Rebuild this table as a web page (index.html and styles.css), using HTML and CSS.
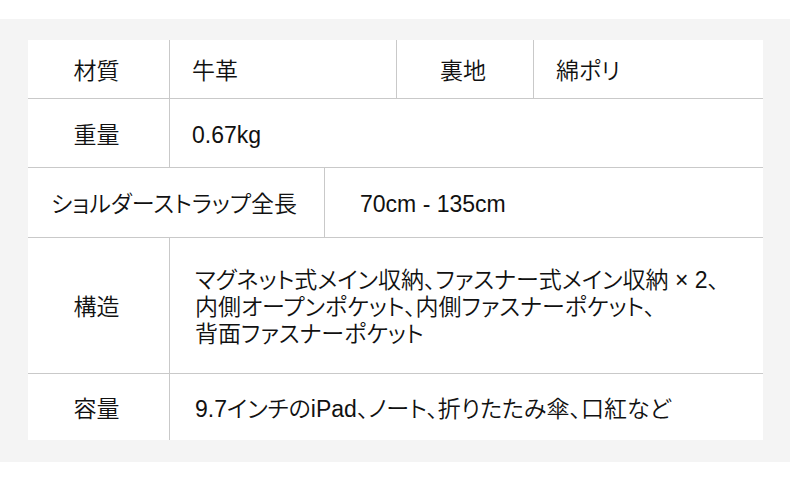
FILE: index.html
```html
<!DOCTYPE html>
<html lang="ja">
<head>
<meta charset="utf-8">
<link rel="stylesheet" href="styles.css">
</head>
<body>
<div class="band">
  <div class="spec">
    <div class="row row-1">
      <div class="cell label">材質</div>
      <div class="cell value">牛革</div>
      <div class="cell label">裏地</div>
      <div class="cell value">綿ポリ</div>
    </div>
    <div class="row row-2">
      <div class="cell label">重量</div>
      <div class="cell value">0.67kg</div>
    </div>
    <div class="row row-3">
      <div class="cell label">ショルダーストラップ全長</div>
      <div class="cell value wide">70cm - 135cm</div>
    </div>
    <div class="row row-4">
      <div class="cell label">構造</div>
      <div class="cell value multi"><p>マグネット式メイン収納、ファスナー式メイン収納 × 2、<br>内側オープンポケット、内側ファスナーポケット、<br>背面ファスナーポケット</p></div>
    </div>
    <div class="row row-5">
      <div class="cell label">容量</div>
      <div class="cell value multi"><p>9.7インチのiPad、ノート、折りたたみ傘、口紅など</p></div>
    </div>
  </div>
</div>
</body>
</html>
```

FILE: styles.css
```css
html, body {
  margin: 0;
  padding: 0;
  background: #ffffff;
}

body {
  font-family: "Liberation Sans", "Noto Sans CJK JP", sans-serif;
  font-size: 23px;
  font-weight: 350;
  color: #111111;
  font-feature-settings: "palt";
}

.band {
  margin-top: 19px;
  background: #f4f4f4;
  padding: 21px 27px 22px 28px;
}

.spec {
  background: #ffffff;
  width: 735px;
}

.row {
  display: grid;
  box-sizing: border-box;
}

.row + .row {
  border-top: 1px solid #c9c9c9;
}

.row-1 { height: 58px; grid-template-columns: 141px 227px 137px 1fr; }
.row-2 { height: 69px; grid-template-columns: 141px 1fr; }
.row-3 { height: 70px; grid-template-columns: 296px 1fr; }
.row-4 { height: 136px; grid-template-columns: 141px 1fr; }
.row-5 { height: 67px; grid-template-columns: 141px 1fr; }

.cell {
  display: flex;
  align-items: center;
  padding-top: 4px;
  box-sizing: border-box;
  line-height: 27px;
}

.cell + .cell {
  border-left: 1px solid #c9c9c9;
}

.label {
  justify-content: center;
  padding-right: 4px;
}

.value {
  padding-left: 22px;
}

.value.wide {
  padding-left: 35px;
}

.value.multi {
  padding-left: 25px;
}

.value p {
  margin: 0;
}
```
